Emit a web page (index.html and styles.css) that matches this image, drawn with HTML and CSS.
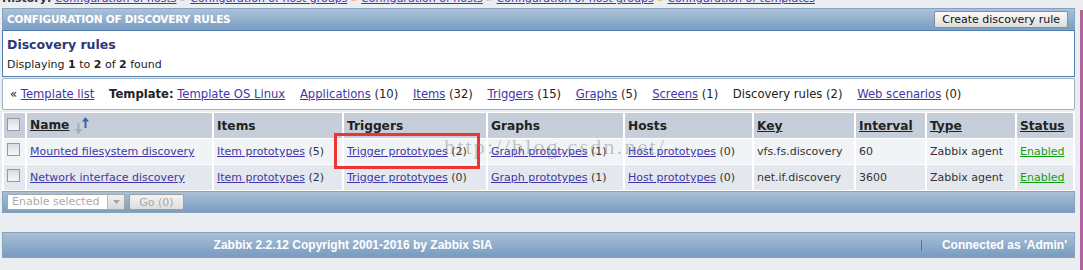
FILE: index.html
```html
<!DOCTYPE html>
<html lang="en">
<head>
    <meta charset="UTF-8">
    <title>Configuration of discovery rules</title>
    <link rel="stylesheet" href="styles.css">
</head>
<body>
    <div class="page">
        <div class="history">
            <div class="history-text">
                <b>History:</b>
                <a href="#">Configuration of hosts</a> <span class="sep">&raquo;</span>
                <a href="#">Configuration of host groups</a> <span class="sep">&raquo;</span>
                <a href="#">Configuration of hosts</a> <span class="sep">&raquo;</span>
                <a href="#">Configuration of host groups</a> <span class="sep">&raquo;</span>
                <a href="#">Configuration of templates</a>
            </div>
        </div>

        <div class="title-bar">
            <span class="title">CONFIGURATION OF DISCOVERY RULES</span>
            <button class="btn">Create discovery rule</button>
        </div>

        <div class="summary">
            <h1>Discovery rules</h1>
            <p>Displaying <b>1</b> to <b>2</b> of <b>2</b> found</p>
        </div>

        <div class="crumbs">
            <span class="crumb">&laquo; <a href="#">Template list</a></span>
            <span class="crumb"><b>Template:</b> <a href="#">Template OS Linux</a></span>
            <span class="crumb"><a href="#">Applications</a> (10)</span>
            <span class="crumb"><a href="#">Items</a> (32)</span>
            <span class="crumb"><a href="#">Triggers</a> (15)</span>
            <span class="crumb"><a href="#">Graphs</a> (5)</span>
            <span class="crumb"><a href="#">Screens</a> (1)</span>
            <span class="crumb">Discovery rules (2)</span>
            <span class="crumb"><a href="#">Web scenarios</a> (0)</span>
        </div>

        <table class="list">
            <colgroup>
                <col class="c-chk">
                <col>
                <col class="c-items">
                <col class="c-triggers">
                <col class="c-graphs">
                <col class="c-hosts">
                <col class="c-key">
                <col class="c-interval">
                <col class="c-type">
                <col class="c-status">
            </colgroup>
            <tr class="head">
                <th><span class="check"></span></th>
                <th><a href="#" class="sort">Name</a>
                    <svg class="sort-icon" width="15" height="19" viewBox="0 0 15 19">
                        <path d="M2.5 7h2v6H7l-3.5 5.5L0 13h2.5z" fill="#a9aeb4"/>
                        <path d="M9.5 12V5.5H7L10.5 1 14 5.5h-2.5V12z" fill="#3c63a9"/>
                    </svg>
                </th>
                <th>Items</th>
                <th>Triggers</th>
                <th>Graphs</th>
                <th>Hosts</th>
                <th><a href="#" class="sort">Key</a></th>
                <th><a href="#" class="sort">Interval</a></th>
                <th><a href="#" class="sort">Type</a></th>
                <th><a href="#" class="sort">Status</a></th>
            </tr>
            <tr class="odd">
                <td><span class="check"></span></td>
                <td><a href="#">Mounted filesystem discovery</a></td>
                <td><a href="#">Item prototypes</a> (5)</td>
                <td><a href="#">Trigger prototypes</a> (2)</td>
                <td><a href="#">Graph prototypes</a> (1)</td>
                <td><a href="#">Host prototypes</a> (0)</td>
                <td>vfs.fs.discovery</td>
                <td>60</td>
                <td>Zabbix agent</td>
                <td><a href="#" class="enabled">Enabled</a></td>
            </tr>
            <tr class="even">
                <td><span class="check"></span></td>
                <td><a href="#">Network interface discovery</a></td>
                <td><a href="#">Item prototypes</a> (2)</td>
                <td><a href="#">Trigger prototypes</a> (0)</td>
                <td><a href="#">Graph prototypes</a> (1)</td>
                <td><a href="#">Host prototypes</a> (0)</td>
                <td>net.if.discovery</td>
                <td>3600</td>
                <td>Zabbix agent</td>
                <td><a href="#" class="enabled">Enabled</a></td>
            </tr>
        </table>

        <div class="list-footer">
            <div class="select">
                <span class="select-text">Enable selected</span>
                <span class="select-arrow">
                    <svg width="9" height="6" viewBox="0 0 9 6"><path d="M1 1h7L4.5 5z" fill="#a0a4a8"/></svg>
                </span>
            </div>
            <button class="btn-go" disabled>Go (0)</button>
        </div>

        <div class="footer">
            <div class="copyright">Zabbix 2.2.12 Copyright 2001-2016 by Zabbix SIA</div>
            <div class="connected"><span>Connected as 'Admin'</span></div>
        </div>

        <div class="mark-box"></div>
        <div class="watermark">http://blog.csdn.net/</div>
    </div>
    <div class="edge"></div>
</body>
</html>
```

FILE: styles.css
```css
body {
    margin: 0;
    padding: 0;
    background-color: #ebeef1;
    font-family: "DejaVu Sans", Verdana, sans-serif;
    font-size: 11px;
    color: #222;
    display: flex;
    height: 270px;
    overflow: hidden;
}
a {
    color: #4236a8;
    text-decoration: underline;
}
.page {
    position: relative;
    flex: 1;
    padding: 0 5px 0 2px;
}
.edge {
    width: 3px;
    margin-top: 10px;
    background-color: #b3619f;
}

.history {
    height: 8px;
    overflow: hidden;
}
.history-text {
    margin-top: -8px;
    line-height: 14px;
    white-space: nowrap;
    color: #333;
}
.history-text .sep {
    color: #e08a2a;
}

.title-bar {
    height: 20px;
    display: flex;
    justify-content: space-between;
    align-items: center;
    padding: 0 6px 0 4px;
    border: 1px solid #86a2c0;
    background: linear-gradient(#abc2d8, #7c9ec2);
}
.title {
    font-weight: bold;
    color: #fff;
    font-size: 10.5px;
    letter-spacing: -0.2px;
}
.btn {
    height: 17px;
    padding: 0 7px;
    font-family: "DejaVu Sans", Verdana, sans-serif;
    font-size: 11px;
    color: #111;
    border: 1px solid #8c8c8c;
    border-radius: 2px;
    background: linear-gradient(#fafafa, #dedede);
}

.summary {
    background-color: #fff;
    border: 1px solid #4f7ead;
    padding: 5px 4px 4px;
}
.summary h1 {
    margin: 0;
    font-size: 12.5px;
    line-height: 18px;
    color: #2a3878;
}
.summary p {
    margin: 4px 0 0;
    line-height: 14px;
}

.crumbs {
    margin-top: 1px;
    background-color: #fff;
    border: 1px solid #a2b1c1;
    border-radius: 2px;
    padding: 8px 7px;
    font-size: 11.6px;
    line-height: 14px;
    white-space: nowrap;
}
.crumb {
    margin-right: 11px;
}

.list {
    width: 100%;
    margin-top: 2px;
    table-layout: fixed;
    border-spacing: 2px 1px;
    background-color: #fff;
}
.c-chk { width: 21px; }
.c-items { width: 128px; }
.c-triggers { width: 142px; }
.c-graphs { width: 135px; }
.c-hosts { width: 127px; }
.c-key { width: 100px; }
.c-interval { width: 69px; }
.c-type { width: 88px; }
.c-status { width: 56px; }
.list th, .list td {
    height: 25px;
    padding: 0 3px;
    text-align: left;
    white-space: nowrap;
    overflow: hidden;
    box-sizing: border-box;
}
.list th {
    background-color: #c6cfd9;
    font-weight: bold;
    font-size: 12.2px;
    vertical-align: middle;
}
.list th a.sort {
    color: #222;
}
.list .odd td {
    background-color: #f1f4f7;
}
.list .even td {
    background-color: #e3e8ee;
}
.list td {
    color: #333;
}
.sort-icon {
    vertical-align: middle;
    margin-left: 1px;
}
.check {
    display: inline-block;
    width: 11px;
    height: 11px;
    border: 1px solid #8f9aa6;
    background: linear-gradient(#d8dce1, #f6f7f9);
    vertical-align: middle;
}
.list th .check {
    margin-top: -4px;
}
.list td .check {
    margin-top: -5px;
}
a.enabled {
    color: #10a010;
}

.list-footer {
    height: 20px;
    display: flex;
    align-items: center;
    gap: 4px;
    padding: 0 4px;
    border: 1px solid #86a2c0;
    background: linear-gradient(#a9c0d7, #7b9dc1);
}
.select {
    display: flex;
    width: 116px;
    height: 14px;
    background-color: #fff;
    border: 1px solid #a8a8a8;
}
.select-text {
    flex: 1;
    padding-left: 4px;
    color: #aaa;
    line-height: 14px;
}
.select-arrow {
    width: 16px;
    display: flex;
    align-items: center;
    justify-content: center;
    background: linear-gradient(#f2f2f2, #d8d8d8);
    border-left: 1px solid #b8b8b8;
}
.btn-go {
    width: 55px;
    height: 16px;
    padding: 0;
    font-family: "DejaVu Sans", Verdana, sans-serif;
    font-size: 11px;
    color: #a8a8a8;
    border: 1px solid #a0a0a0;
    border-radius: 2px;
    background: linear-gradient(#f4f4f4, #dedede);
}

.footer {
    margin-top: 19px;
    height: 24px;
    display: flex;
    align-items: center;
    border: 1px solid #86a2c0;
    background: linear-gradient(#a9c0d7, #789bc0);
    font-family: "Liberation Sans", Arial, sans-serif;
    font-weight: bold;
    font-size: 12px;
    color: #fff;
}
.copyright {
    width: 700px;
    text-align: center;
}
.connected {
    flex: 1;
    display: flex;
    justify-content: flex-end;
    padding-right: 7px;
}
.connected span {
    border-left: 1px solid #5a6f9a;
    padding-left: 20px;
    line-height: 11px;
}

.mark-box {
    position: absolute;
    left: 334px;
    top: 133px;
    width: 140px;
    height: 30px;
    border: 3px solid #ee3535;
}
.watermark {
    position: absolute;
    left: 444px;
    top: 134px;
    font-family: "Liberation Serif", "Times New Roman", serif;
    font-size: 22px;
    letter-spacing: 2.2px;
    color: rgba(120, 120, 120, 0.42);
    white-space: nowrap;
}
```
